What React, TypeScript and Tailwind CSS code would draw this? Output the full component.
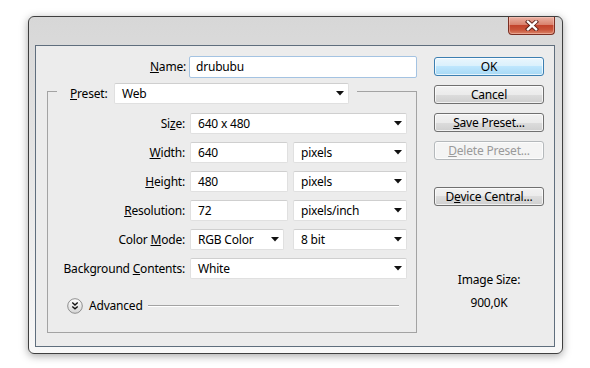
import React from "react";

const font = { fontFamily: '"Noto Sans", "Segoe UI", Tahoma, sans-serif' };

function Arrow() {
  return (
    <svg width="8" height="5" viewBox="0 0 8 5" className="shrink-0">
      <polygon points="0,0 8,0 4,4.5" fill="#111" />
    </svg>
  );
}

function Field({ w, value, select, focus }: { w: string; value: string; select?: boolean; focus?: boolean }) {
  return (
    <div
      className={`${w} h-[21px] flex items-center justify-between bg-white rounded-[2px] border pl-[7px] pr-[4px] ${
        focus ? "border-[#a4c3e2]" : "border-[#e0e0e0] border-t-[#cfcfcf]"
      }`}
    >
      <span className="text-[12px] leading-[16px] text-black whitespace-nowrap">{value}</span>
      {select ? <Arrow /> : null}
    </div>
  );
}

function Btn({ children, kind }: { children: React.ReactNode; kind?: "default" | "disabled" }) {
  const cls =
    kind === "default"
      ? "border-[#3c7fb1] bg-[linear-gradient(to_bottom,#eaf6fd,#d9f0fc_50%,#bee6fd_50%,#a7d9f5)] text-black"
      : kind === "disabled"
      ? "border-[#b5b9bc] bg-[#f4f4f4] text-[#9a9a9a]"
      : "border-[#707070] bg-[linear-gradient(to_bottom,#f2f2f2,#ebebeb_50%,#dddddd_50%,#cfcfcf)] text-black";
  return (
    <div
      className={`h-[19px] w-[110px] rounded-[3px] border flex items-center justify-center text-[12px] leading-[16px] shadow-[inset_0_0_0_1px_rgba(255,255,255,0.7)] ${cls}`}
    >
      {children}
    </div>
  );
}

function Row({ label, children }: { label: React.ReactNode; children: React.ReactNode }) {
  return (
    <div className="flex items-center h-[21px]">
      <div className="w-[137px] text-right text-[12px] leading-[16px] text-black whitespace-nowrap">{label}</div>
      <div className="ml-[5px] flex items-center">{children}</div>
    </div>
  );
}

function AdvIcon() {
  return (
    <svg width="16" height="16" viewBox="0 0 16 16" className="shrink-0">
      <defs>
        <linearGradient id="ag" x1="0" y1="0" x2="0" y2="1">
          <stop offset="0" stopColor="#ffffff" />
          <stop offset="1" stopColor="#d4d4d4" />
        </linearGradient>
      </defs>
      <circle cx="8" cy="8" r="7.3" fill="url(#ag)" stroke="#8e8e8e" strokeWidth="1" />
      <path d="M5.3 4.6 L8 7 L10.7 4.6" fill="none" stroke="#111" strokeWidth="1.4" />
      <path d="M5.3 8.4 L8 10.8 L10.7 8.4" fill="none" stroke="#111" strokeWidth="1.4" />
    </svg>
  );
}

export default function App() {
  return (
    <div className="w-[590px] h-[368px] bg-white pt-[16px] pl-[28px] tracking-[-0.2px]" style={font}>
      <div className="w-[535px] h-[338px] rounded-[6px] border border-[#3f3f3f] bg-[linear-gradient(to_bottom,#d7d7d7,#e4e4e4_40%,#f8f8f8)] shadow-[0_2px_9px_rgba(0,0,0,0.35)] flex flex-col pl-[6px] pr-[7px] pb-[6px]">
        {/* title bar */}
        <div className="h-[28px] flex justify-end items-start">
          <div className="w-[47px] h-[18px] rounded-b-[4px] border border-t-0 border-[#7a2e22] bg-[linear-gradient(to_bottom,#eab1a3,#d9826e_45%,#c2432c_50%,#c9543a_75%,#d98468)] shadow-[inset_0_0_0_1px_rgba(255,210,200,0.45)] flex items-center justify-center">
            <svg width="14" height="11" viewBox="0 0 14 11">
              <path d="M3 1.8 L11 9.2 M11 1.8 L3 9.2" stroke="#5a2018" strokeWidth="4.2" strokeLinecap="square" />
              <path d="M3 1.8 L11 9.2 M11 1.8 L3 9.2" stroke="#ffffff" strokeWidth="2.4" strokeLinecap="square" />
            </svg>
          </div>
        </div>
        {/* client area */}
        <div className="flex-1 border border-[#5f6e7d] bg-[#ececec] flex">
          {/* left column */}
          <div className="w-[381px] flex flex-col">
            <div className="mt-[10px] flex items-center h-[22px]">
              <div className="w-[150px] text-right text-[12px] leading-[16px] text-black">
                <span className="underline">N</span>ame:
              </div>
              <div className="ml-[3px]">
                <div className="w-[228px] h-[22px] flex items-center bg-white rounded-[2px] border border-[#a4c3e2] pl-[6px]">
                  <span className="text-[12px] leading-[16px] text-black">drububu</span>
                </div>
              </div>
            </div>
            {/* group box */}
            <div className="mt-[13px] ml-[11px] w-[370px] h-[242px] border border-[#a3a3a3] flex flex-col">
              <div className="-mt-[9px] ml-[9px] w-fit bg-[#ececec] pl-[13px] pr-[8px] flex items-center h-[21px]">
                <div className="w-[44px] text-[12px] leading-[16px] text-black">
                  <span className="underline">P</span>reset:
                </div>
                <Field w="w-[235px]" value="Web" select />
              </div>
              <div className="mt-[9px] flex flex-col gap-[8px]">
                <Row label={<>Si<span className="underline">z</span>e:</>}>
                  <Field w="w-[217px]" value="640 x 480" select />
                </Row>
                <Row label={<><span className="underline">W</span>idth:</>}>
                  <Field w="w-[98px]" value="640" />
                  <div className="ml-[5px]">
                    <Field w="w-[114px]" value="pixels" select />
                  </div>
                </Row>
                <Row label={<><span className="underline">H</span>eight:</>}>
                  <Field w="w-[98px]" value="480" />
                  <div className="ml-[5px]">
                    <Field w="w-[114px]" value="pixels" select />
                  </div>
                </Row>
                <Row label={<><span className="underline">R</span>esolution:</>}>
                  <Field w="w-[98px]" value="72" />
                  <div className="ml-[5px]">
                    <Field w="w-[114px]" value="pixels/inch" select />
                  </div>
                </Row>
                <Row label={<>Color <span className="underline">M</span>ode:</>}>
                  <Field w="w-[94px]" value="RGB Color" select />
                  <div className="ml-[9px]">
                    <Field w="w-[114px]" value="8 bit" select />
                  </div>
                </Row>
                <Row label={<>Background <span className="underline">C</span>ontents:</>}>
                  <Field w="w-[217px]" value="White" select />
                </Row>
              </div>
              <div className="mt-[19px] ml-[19px] mr-[17px] flex items-center h-[16px]">
                <AdvIcon />
                <span className="ml-[6px] text-[12px] leading-[16px] text-black">Advanced</span>
                <div className="ml-[5px] flex-1 h-[2px] border-t border-[#a3a3a3] border-b border-b-white" />
              </div>
            </div>
          </div>
          {/* right column */}
          <div className="ml-[17px] w-[110px] flex flex-col items-center">
            <div className="mt-[11px] flex flex-col gap-[9px]">
              <Btn kind="default">OK</Btn>
              <Btn>Cancel</Btn>
              <Btn>
                <span>
                  <span className="underline">S</span>ave Preset...
                </span>
              </Btn>
              <Btn kind="disabled">
                <span>
                  <span className="underline">D</span>elete Preset...
                </span>
              </Btn>
            </div>
            <div className="mt-[27px]">
              <Btn>
                <span>
                  D<span className="underline">e</span>vice Central...
                </span>
              </Btn>
            </div>
            <div className="mt-[66px] text-[12px] leading-[16px] text-black">Image Size:</div>
            <div className="mt-[7px] text-[12px] leading-[16px] text-black">900,0K</div>
          </div>
        </div>
      </div>
    </div>
  );
}
